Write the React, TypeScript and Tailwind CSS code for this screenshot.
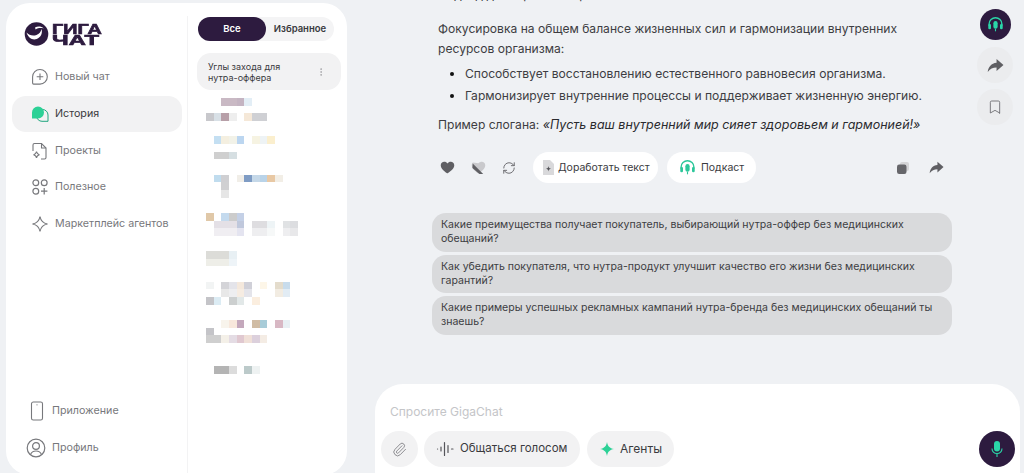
import React from 'react';
import { RefreshCw, Paperclip, Bookmark, MoreVertical } from 'lucide-react';

const blurred: string[][] = [
  ['', '', '#c9b9c4', '#c9b9c4', '#c4b4c2', '#e3eef6'],
  [],
  ['#c8c8cc', '#d8e0e6', '#b79fa8', '#eeeeee', '', '#f5e8d8', '#cfd0d4', '#cfd0d4'],
  [],
  [],
  ['', '#c4dff2', '#f4efe0', '#f2f2e8', '#bcd6f0', '', '#f6f3e2', '#eef3f5', '#fbefce'],
  [],
  ['', '#cfcfcf', '#cfcfcf', '#d6dfe2'],
  [],
  [],
  ['', '#c0dcee', '#cfcfd2', '', '#f1eee8', '#7f9cc4', '#c5d8e8', '#b9d3e8', '#e8c8a4', '#f2eee6'],
  ['', '', '#d0d0d2'],
  ['', '', '#e6e6e6'],
  [],
  [],
  ['#e0c8a8', '', '#c4daee', '#cccccc', '#c4d0e6'],
  ['', '#e4e0e6', '#e4e0e6', '#e4e0e6', '#c0c8dc', '', '#dedde0', '#dedde0', '#eef4f6', '', '#e0e2e4', '#dcdde0'],
  ['', '#f0eef2', '#f0eef2', '#f0eef2', '#e4e4f0', '', '#eeeef0', '#eeeef0', '#f6f8f8', '', '#eeeef0', '#e8e8ea'],
  [],
  [],
  ['#dcdcd8', '#dcdcd8', '#dcdcd8', '#e8f0f4'],
  ['#eeeee8', '#eeeee8', '#eeeee8', '#eef4f8'],
  [],
  [],
  ['#f2f4f4', '', '#d4d4d8', '#e4e4ea', '#f4e8dc', '#d0d0d8', '', '#fdf6e8', '', '#e4dccc', '#c8dcec'],
  ['', '', '#e8e8e8', '#eeeef0', '#f6ece2', '#e4e4ea', '', '', '', '#f2ece2', '#e2ecf4'],
  ['#c4c4c8', '#dcecf4', '', '#cccfcf', '#e2e8e8', '', '#fbeedf'],
  [],
  [],
  ['', '', '#f8f4ec', '#f8e8dc', '#c4a8bc', '', '#d0bca4', '#a8ccd8', '', '#d8b8c4', '#e8f0f4'],
  ['#c4c4c8'],
  ['#cfcfcf', '#cfcfcf', '#f4f0e8', '#e4dce4', '#e0c8d0', '#f0e0d8', '#dcd0dc', '#f4ece4'],
  [],
  [],
  [],
  ['', '#b4b4b4', '#b4b4b4', '#dcdcdc', '', '#bccaca', '#eef2f2'],
];

const NewChatIcon = () => (
  <svg width="18" height="18" viewBox="0 0 18 18" fill="none" stroke="#77787c" strokeWidth="1.1">
    <path d="M9 1.5a7.2 7.2 0 0 1 0 14.6H2.6c-.6 0-1-.4-1-1V8.8A7.3 7.3 0 0 1 9 1.5Z" />
    <path d="M9 5.5v6.6M5.7 8.8h6.6" />
  </svg>
);

const HistoryIcon = () => (
  <svg width="18" height="18" viewBox="0 0 18 18" fill="none">
    <path d="M8 4.5h3.5a5.5 5.5 0 0 1 5.5 5.500v6.300h-6A5.500 5.500 0 0 1 5.500 11" stroke="#21a67f" strokeWidth="1" />
    <path d="M7 1.500a6 6 0 0 1 6 6 6 6 0 0 1-6 6H1V7.500a6 6 0 0 1 6-6Z" fill="#2cd196" />
  </svg>
);

const ProjectsIcon = () => (
  <svg width="18" height="18" viewBox="0 0 18 18" fill="none" stroke="#77787c" strokeWidth="1.1">
    <path d="M2 9V3a1.500 1.500 0 0 1 1.500-1.500h7L15 6v9.500a1.500 1.500 0 0 1-1.500 1.500H10" />
    <path d="M10.500 1.500V6H15" />
    <path d="M5.500 9.500c.3 2 1 2.800 3 3.200-2 .4-2.700 1.200-3 3.300-.3-2.100-1-2.900-3-3.300 2-.4 2.700-1.200 3-3.200Z" />
  </svg>
);

const UsefulIcon = () => (
  <svg width="18" height="18" viewBox="0 0 18 18" fill="none" stroke="#77787c" strokeWidth="1.2">
    <circle cx="4.800" cy="4.800" r="2.900" />
    <circle cx="13.200" cy="4.800" r="2.900" />
    <circle cx="4.800" cy="13.200" r="2.900" />
    <path d="M13.200 10v6.400M10 13.200h6.400" />
  </svg>
);

const MarketIcon = () => (
  <svg width="18" height="18" viewBox="0 0 18 18" fill="none" stroke="#77787c" strokeWidth="1.1">
    <path d="M9 1.500c.8 4.500 3 6.700 7.500 7.500-4.500.8-6.700 3-7.500 7.500C8.200 12 6 9.800 1.500 9 6 8.200 8.200 6 9 1.500Z" />
  </svg>
);

const PhoneIcon = () => (
  <svg width="14" height="20" viewBox="0 0 14 20" fill="none" stroke="#77787c" strokeWidth="1.1">
    <rect x="1.500" y="1" width="11" height="18" rx="1.800" />
    <circle cx="7" cy="3.800" r=".6" fill="#77787c" stroke="none" />
  </svg>
);

const ProfileIcon = () => (
  <svg width="20" height="20" viewBox="0 0 20 20" fill="none" stroke="#77787c" strokeWidth="1.200">
    <circle cx="10" cy="10" r="8.800" />
    <circle cx="10" cy="8" r="3.400" />
    <path d="M4.500 16.500c1-2.500 3-3.500 5.500-3.500s4.500 1 5.500 3.500" />
  </svg>
);

const Logo = () => (
  <div className="flex items-center gap-[3px]">
    <svg width="25" height="24" viewBox="0 0 25 24">
      <circle cx="12.500" cy="12" r="11.800" fill="#2d1b3f" />
      <path d="M2.500 10.500c2.500 2.800 6.500 3.800 10 2.400 2.700-1 4.400-3 5-5.900 1.300 4-.6 8.400-4.800 10-3.900 1.400-8.200-.5-10.200-6.500Z" fill="#ffffff" />
      <path d="M11 5.500c2.800-1.600 6.200-1.400 8.800.9-2.900-.8-5.700-.6-8.200 1Z" fill="#ffffff" />
    </svg>
    <div className="flex flex-col font-bold text-[#2d1b3f] text-[15px] leading-[11.500px] [-webkit-text-stroke:0.7px_#2d1b3f] [font-family:'Liberation_Sans',sans-serif]">
      <span className="origin-left scale-x-[1.32]">ГИГА</span>
      <span className="origin-left scale-x-[1.58]">ЧАТ</span>
    </div>
  </div>
);

const HeadphonesIcon = ({ size, color }: { size: number; color: string }) => (
  <svg width={size} height={size} viewBox="0 0 20 20" fill="none">
    <path d="M2.500 11V9.500a7.500 7.500 0 0 1 15 0V11" stroke={color} strokeWidth="1.600" />
    <rect x="1.500" y="9.500" width="3.200" height="6" rx="1.500" fill={color} />
    <rect x="15.300" y="9.500" width="3.200" height="6" rx="1.500" fill={color} />
    <rect x="7.500" y="6" width="5" height="9" rx="2.500" fill={color} />
    <path d="M10 15v3" stroke={color} strokeWidth="1.300" />
  </svg>
);

const ArrowIcon = ({ size }: { size: number }) => (
  <svg width={size} height={size} viewBox="0 0 16 16" fill="#5f5f63">
    <path d="M9 1.800 15.500 7.500 9 13.200V9.800C5.500 9.800 2.800 11 .7 14c.6-4.800 3.300-8 8.300-8.600V1.800Z" />
  </svg>
);

const navItems = [
  { label: 'Новый чат', icon: <NewChatIcon /> },
  { label: 'История', icon: <HistoryIcon />, active: true },
  { label: 'Проекты', icon: <ProjectsIcon /> },
  { label: 'Полезное', icon: <UsefulIcon /> },
  { label: 'Маркетплейс агентов', icon: <MarketIcon /> },
];

const suggestions = [
  'Какие преимущества получает покупатель, выбирающий нутра-оффер без медицинских обещаний?',
  'Как убедить покупателя, что нутра-продукт улучшит качество его жизни без медицинских гарантий?',
  'Какие примеры успешных рекламных кампаний нутра-бренда без медицинских обещаний ты знаешь?',
];

const App: React.FC = () => {
  return (
    <div className="flex h-[473px] w-[1024px] overflow-hidden bg-[#eff1f4] text-[#333338] [font-family:Inter,sans-serif]">
      {/* Sidebar */}
      <aside className="mt-[3px] ml-[6px] flex h-[472px] w-[341px] shrink-0 rounded-[24px] bg-white">
        <div className="mt-[13px] mb-[1px] flex w-[182px] flex-col border-r border-[#f3f3f4] pb-[16px]">
          <div className="pl-[18px] pt-[6px]">
            <Logo />
          </div>
          <nav className="mt-[13px] flex flex-col pl-[6px] pr-[5px]">
            {navItems.map(item => (
              <div
                key={item.label}
                className={`flex h-[36.700px] items-center gap-[6px] whitespace-nowrap rounded-[14px] pl-[19px] text-[10.700px] ${
                  item.active ? 'bg-[#f2f2f3] text-[#3a3a3e]' : 'text-[#77787c]'
                }`}
              >
                {item.icon}
                <span>{item.label}</span>
              </div>
            ))}
          </nav>
          <div className="mt-auto flex flex-col gap-[17px] pl-[20px] text-[10.700px] text-[#77787c]">
            <div className="flex h-[20px] items-center gap-[8px] pl-[4px]">
              <PhoneIcon />
              <span>Приложение</span>
            </div>
            <div className="flex h-[20px] items-center gap-[6px]">
              <ProfileIcon />
              <span>Профиль</span>
            </div>
          </div>
        </div>

        <div className="flex flex-1 flex-col pl-[10px] pr-[6px] pt-[14px]">
          <div className="flex h-[24px] w-[136px] items-center rounded-full bg-[#f4f4f5] text-[9.500px] font-semibold">
            <div className="flex h-full w-[68px] items-center justify-center rounded-full bg-[#2d1b3f] text-white">Все</div>
            <div className="flex-1 text-center text-[#3a3a3e]">Избранное</div>
          </div>
          <div className="mt-[12px] -ml-[1px] flex h-[37px] items-center justify-between rounded-[14px] bg-[#f2f2f3] pl-[11px] pr-[15px] text-[9px] leading-[11px] text-[#3a3a3e]">
            <span className="w-[100px]">Углы захода для нутра-оффера</span>
            <MoreVertical size={10} className="text-[#a5a5a8]" />
          </div>
          <div className="mt-[8px] flex flex-col pl-[8px] blur-[0.5px]">
            {blurred.map((row, i) => (
              <div key={i} className="flex h-[7.670px]">
                {row.map((color, j) => (
                  <div key={j} className="h-full w-[7.670px]" style={{ backgroundColor: color || 'transparent' }} />
                ))}
              </div>
            ))}
          </div>
        </div>
      </aside>

      {/* Main */}
      <main className="flex min-w-0 flex-1 flex-col">
        <div className="flex h-[384px] shrink-0 overflow-hidden">
          <div className="ml-[85px] w-[520px] shrink-0">
            <div className="-mt-[15px] px-[6px] text-[12.100px] leading-[20px] text-[#3d3d42]">
              <p className="h-[20px]">Подход для гармонии организма</p>
              <p className="mt-[14px]">
                Фокусировка на общем балансе жизненных сил и гармонизации внутренних ресурсов организма:
              </p>
              <ul className="mt-[5px] flex list-disc flex-col gap-[2px] pl-[27px] marker:text-[#111]">
                <li>Способствует восстановлению естественного равновесия организма.</li>
                <li>Гармонизирует внутренние процессы и поддерживает жизненную энергию.</li>
              </ul>
              <p className="mt-[9px]">
                Пример слогана: <em className="text-[12.500px] text-[#2a2a2e]">«Пусть ваш внутренний мир сияет здоровьем и гармонией!»</em>
              </p>
            </div>

            <div className="mt-[17px] flex h-[31px] items-center px-[8px]">
              <svg width="15" height="15" viewBox="0 0 16 16" fill="#5f5f63">
                <path d="M8 14.500C3 11 .8 8.500.8 5.600.8 3.300 2.500 1.800 4.500 1.800c1.500 0 2.700.7 3.500 2 .8-1.300 2-2 3.500-2 2 0 3.700 1.500 3.700 3.800 0 2.900-2.200 5.400-7.700 8.900Z" />
              </svg>
              <svg className="ml-[16px]" width="15" height="15" viewBox="0 0 16 16">
                <path d="M8 3.500c1-1.200 2.200-1.700 3.500-1.700 2 0 3.700 1.500 3.700 3.800 0 2.900-2.200 5.400-7.200 8.900C3 11 .8 8.500.8 5.600c0-1.200.5-2.200 1.200-2.900Z" fill="#c9c9cc" />
                <path d="M1.800 3.800 13 14.800l-4 .2-7.500-6.500Z" fill="#5f5f63" />
              </svg>
              <RefreshCw className="ml-[16px] text-[#66666a]" size={14} strokeWidth={1.600} />
              <button className="ml-[17px] flex h-[31px] w-[125px] items-center gap-[4px] rounded-full bg-white pl-[9px] text-[10.500px] text-[#3a3a3e]">
                <svg width="12" height="15" viewBox="0 0 12 15">
                  <path d="M1 0h7l4 4v11H1Z" fill="#d9d9db" />
                  <path d="M6.500 6c.3 1.800 1 2.500 2.700 2.800-1.700.3-2.400 1-2.700 2.700-.3-1.700-1-2.400-2.700-2.700C5.500 8.500 6.200 7.800 6.500 6Z" fill="#55555a" />
                </svg>
                Доработать текст
              </button>
              <button className="ml-[9px] flex h-[31px] w-[89px] items-center gap-[5px] rounded-full bg-white pl-[12px] text-[10.500px] text-[#3a3a3e]">
                <HeadphonesIcon size={17} color="#2cc79a" />
                Подкаст
              </button>
              <div className="ml-auto flex items-center gap-[19px]">
                <svg width="14" height="14" viewBox="0 0 14 14">
                  <rect x="4" y="1" width="9" height="9" rx="2" fill="#d4d4d6" />
                  <rect x="1" y="3.500" width="9.500" height="9.500" rx="2.200" fill="#66666a" />
                </svg>
                <ArrowIcon size={15} />
              </div>
            </div>

            <div className="mt-[30px] flex flex-col gap-[3px] text-[10.550px] leading-[14px] text-[#3d3d42]">
              {suggestions.map(text => (
                <div key={text} className="h-[38.500px] rounded-[14px] bg-[#d9dadc] px-[9px] pt-[5px]">
                  {text}
                </div>
              ))}
            </div>
          </div>

          <div className="mr-[11px] ml-auto flex w-[36px] flex-col items-center pt-[9px]">
            <div className="flex h-[31px] w-[31px] items-center justify-center rounded-full bg-[#2d1b3f]">
              <HeadphonesIcon size={17} color="#2ad6a8" />
            </div>
            <div className="mt-[7px] flex h-[36px] w-[36px] items-center justify-center rounded-full bg-[#ebecee]">
              <ArrowIcon size={17} />
            </div>
            <div className="mt-[6px] flex h-[36px] w-[36px] items-center justify-center rounded-full bg-[#ebecee]">
              <Bookmark size={16} strokeWidth={1.300} className="text-[#6a6a6e]" />
            </div>
          </div>
        </div>

        <div className="mr-[4px] ml-[28px] flex h-[100px] shrink-0 flex-col rounded-t-[28px] bg-white pl-[6px] pr-[5px]">
          <div className="mt-[20px] pl-[9px] text-[12px] leading-[16px] text-[#c4c5c8]">Спросите GigaChat</div>
          <div className="mt-[11px] flex h-[36px] items-center text-[11.500px] text-[#3a3a3e]">
            <div className="flex h-[36px] w-[37px] items-center justify-center rounded-full bg-[#f2f2f3]">
              <Paperclip size={15} strokeWidth={1.300} className="text-[#77787c]" />
            </div>
            <div className="ml-[6px] flex h-[36px] w-[156px] items-center gap-[4px] rounded-full bg-[#f2f2f3] pl-[12px]">
              <svg width="20" height="16" viewBox="0 0 20 16" stroke="#55555a" strokeWidth="1.200" strokeLinecap="round">
                <path d="M1.500 8h.1M5 6v4M8.500 1.500v13M12 4.500v7M15.500 8h1.500" />
              </svg>
              Общаться голосом
            </div>
            <div className="ml-[7px] flex h-[36px] w-[87px] items-center gap-[6px] rounded-full bg-[#f2f2f3] pl-[13px] text-[12px]">
              <svg width="14" height="14" viewBox="0 0 14 14" fill="#2cd196">
                <path d="M7 0c.7 4.300 2.700 6.300 7 7-4.300.7-6.300 2.700-7 7-.7-4.300-2.700-6.300-7-7 4.300-.7 6.300-2.700 7-7Z" />
              </svg>
              Агенты
            </div>
            <div className="ml-auto flex h-[36px] w-[36px] items-center justify-center rounded-full bg-[#2d1b3f]">
              <svg width="16" height="18" viewBox="0 0 16 18" fill="none">
                <rect x="5" y="1" width="6" height="10.500" rx="3" fill="#2ad6a8" />
                <path d="M3 8.500c0 3 2 5 5 5s5-2 5-5M8 13.500V17" stroke="#2ad6a8" strokeWidth="1.100" />
              </svg>
            </div>
          </div>
        </div>
      </main>
    </div>
  );
};

export default App;
